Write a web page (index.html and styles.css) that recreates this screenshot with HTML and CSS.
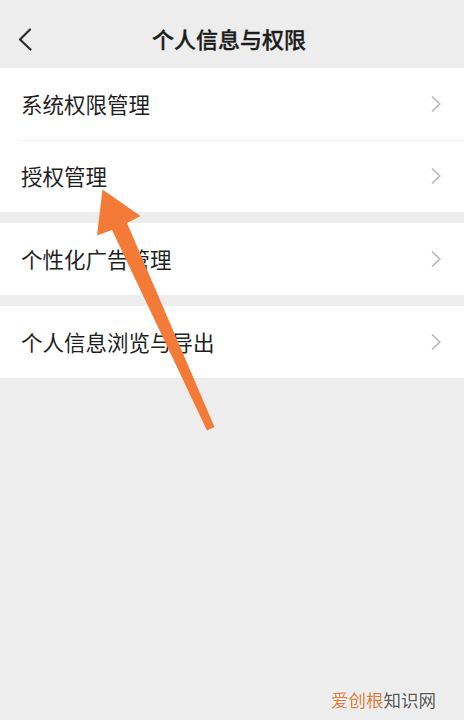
FILE: index.html
```html
<!DOCTYPE html>
<html lang="zh-CN">
<head>
<meta charset="utf-8">
<title>个人信息与权限</title>
<link rel="stylesheet" href="styles.css">
</head>
<body>
<div class="page">
  <header class="header">
    <div class="back">
      <svg width="24" height="28" viewBox="0 0 24 28"><polyline points="16,6.5 6,16.5 16.5,26.5" fill="none" stroke="#2b2b2b" stroke-width="2.2" stroke-linecap="round" stroke-linejoin="round"/></svg>
    </div>
    <h1 class="title">个人信息与权限</h1>
    <div class="spacer"></div>
  </header>
  <main class="list">
    <section class="group">
      <div class="row"><span class="label">系统权限管理</span><svg class="chev" width="12" height="18" viewBox="0 0 12 18"><polyline points="2,1.5 9.8,9 2,16.5" fill="none" stroke="#b8b8b8" stroke-width="1.6"/></svg></div>
      <div class="row"><span class="label">授权管理</span><svg class="chev" width="12" height="18" viewBox="0 0 12 18"><polyline points="2,1.5 9.8,9 2,16.5" fill="none" stroke="#b8b8b8" stroke-width="1.6"/></svg></div>
    </section>
    <section class="group">
      <div class="row"><span class="label">个性化广告管理</span><svg class="chev" width="12" height="18" viewBox="0 0 12 18"><polyline points="2,1.5 9.8,9 2,16.5" fill="none" stroke="#b8b8b8" stroke-width="1.6"/></svg></div>
    </section>
    <section class="group">
      <div class="row"><span class="label">个人信息浏览与导出</span><svg class="chev" width="12" height="18" viewBox="0 0 12 18"><polyline points="2,1.5 9.8,9 2,16.5" fill="none" stroke="#b8b8b8" stroke-width="1.6"/></svg></div>
    </section>
  </main>
  <svg class="pointer" width="464" height="720" viewBox="0 0 464 720"><polygon points="102.5,189.5 140.5,216 127,223 214.5,427 207,430.5 112,230 97,235.5" fill="#f47a38"/></svg>
  <div class="watermark"><span class="wm-a">爱创根</span><span class="wm-b">知识网</span></div>
</div>
</body>
</html>
```
FILE: styles.css
```css
* { box-sizing: border-box; }
html, body { margin: 0; padding: 0; }
body {
  background: #ededed;
  font-family: "Noto Sans CJK SC", "Noto Sans", sans-serif;
  color: #1f1f1f;
}
.page {
  position: relative;
  width: 464px;
  height: 720px;
  overflow: hidden;
  background: #ededed;
}
.header {
  height: 68px;
  padding-top: 8px;
  display: grid;
  grid-template-columns: 54px 1fr 60px;
  align-items: center;
}
.back {
  padding-left: 14px;
  padding-bottom: 2px;
  display: flex;
  align-items: center;
}
.back svg { display: block; }
.title {
  margin: 0;
  text-align: center;
  font-size: 22px;
  font-weight: 500;
  color: #1c1c1c;
  line-height: 28px;
  -webkit-text-stroke: 0.35px #1c1c1c;
}
.list {
  display: flex;
  flex-direction: column;
  gap: 11px;
}
.group {
  background: #ffffff;
  display: flex;
  flex-direction: column;
}
.row {
  position: relative;
  height: 72px;
  display: flex;
  align-items: center;
  justify-content: space-between;
  padding: 0 22px 0 21px;
}
.row + .row::before {
  content: "";
  position: absolute;
  top: 0;
  left: 18px;
  right: 0;
  height: 1px;
  background: #f0f0f0;
}
.label {
  font-size: 21.5px;
  line-height: 28px;
  color: #1f1f1f;
}
.chev { display: block; }
.pointer {
  position: absolute;
  left: 0;
  top: 0;
  pointer-events: none;
}
.watermark {
  position: absolute;
  left: 331px;
  top: 688px;
  font-size: 17.5px;
  line-height: 24px;
  text-shadow: 0 0 2px #fff, 0 0 2px #fff;
}
.wm-a { color: #e0783a; }
.wm-b { color: #555555; }
```
